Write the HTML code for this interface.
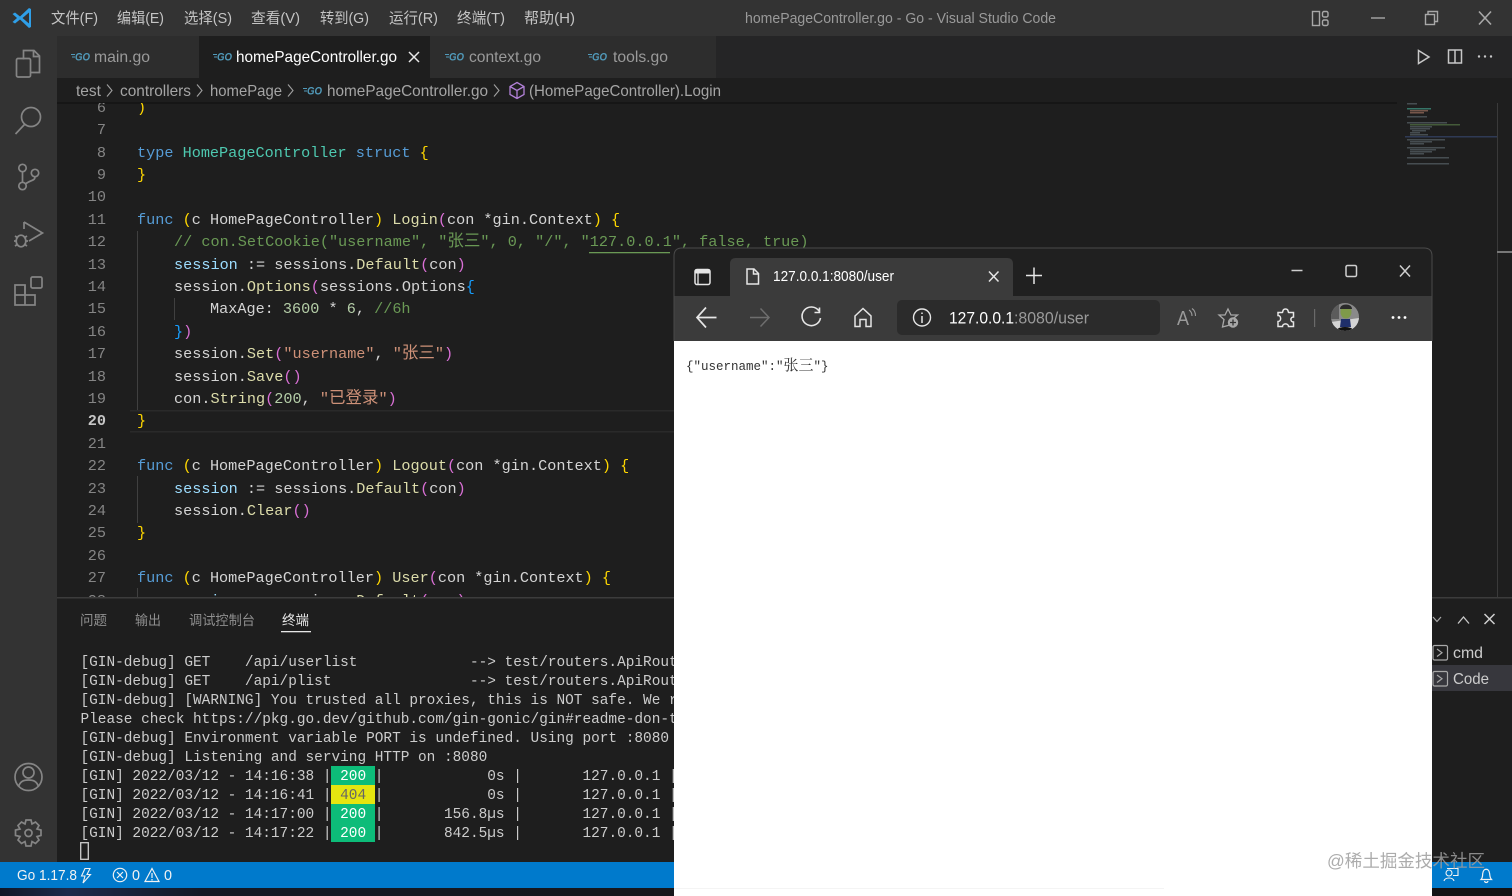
<!DOCTYPE html>
<html><head><meta charset="utf-8"><title>homePageController.go - Go - Visual Studio Code</title>
<style>
html,body{margin:0;padding:0;width:1512px;height:896px;overflow:hidden;background:#1e1e1e}
svg{display:block;position:absolute;left:0;top:0;filter:blur(.3px)}
text{white-space:pre}
.ui{font-family:"Liberation Sans","Noto Sans CJK SC",sans-serif}
.code{font-family:"Liberation Mono","Noto Sans CJK SC",monospace;font-size:15.2px;fill:#d4d4d4}
.term{font-family:"Liberation Mono","Noto Sans CJK SC",monospace;font-size:14.43px;fill:#cccccc}
.ln{font-family:"Liberation Mono",monospace;font-size:15.2px;fill:#858585;text-anchor:end}
.k{fill:#569cd6}.t{fill:#4ec9b0}.f{fill:#dcdcaa}.v{fill:#9cdcfe}.s{fill:#ce9178}.n{fill:#b5cea8}.c{fill:#6a9955}
.g{fill:#ffd700}.p{fill:#da70d6}.b{fill:#179fff}
.cj{font-size:16.5px}
.ic{fill:none;stroke:#858585;stroke-width:1.7}
.bi{fill:none;stroke:#e6e6e6;stroke-width:1.5}
.go{font-family:"Liberation Sans",sans-serif;font-size:11px;font-weight:bold;font-style:italic;fill:#519aba}
</style></head><body>
<svg width="1512" height="896" viewBox="0 0 1512 896" xmlns="http://www.w3.org/2000/svg">
<defs>
<clipPath id="ed"><rect x="57" y="103" width="1455" height="495"/></clipPath>
<clipPath id="av"><circle cx="1345" cy="317" r="14"/></clipPath>
<linearGradient id="strip" x1="0" x2="1" y1="0" y2="0"><stop offset="0" stop-color="#0f1626"/><stop offset=".1" stop-color="#1c2b4c"/><stop offset=".3" stop-color="#141825"/><stop offset="1" stop-color="#17171b"/></linearGradient>
</defs>

<rect width="1512" height="896" fill="#1e1e1e"/>
<!-- title bar -->
<rect width="1512" height="36" fill="#333333"/>
<path d="M29 8 L20 16.5 L15 12.5 L12.5 14 L17 18 L12.5 22 L15 23.5 L20 19.5 L29 28 L31 27 V9Z" fill="#2f9fe8"/>
<path d="M29 12.5 L22.5 18 L29 23.5Z" fill="#333"/>
<g class="ui" font-size="15" fill="#c4c4c4">
<text x="51" y="23" textLength="47" lengthAdjust="spacingAndGlyphs">文件(F)</text>
<text x="117" y="23" textLength="47" lengthAdjust="spacingAndGlyphs">编辑(E)</text>
<text x="184" y="23" textLength="48" lengthAdjust="spacingAndGlyphs">选择(S)</text>
<text x="251" y="23" textLength="49" lengthAdjust="spacingAndGlyphs">查看(V)</text>
<text x="320" y="23" textLength="49" lengthAdjust="spacingAndGlyphs">转到(G)</text>
<text x="389" y="23" textLength="49" lengthAdjust="spacingAndGlyphs">运行(R)</text>
<text x="457" y="23" textLength="48" lengthAdjust="spacingAndGlyphs">终端(T)</text>
<text x="524" y="23" textLength="51" lengthAdjust="spacingAndGlyphs">帮助(H)</text>
</g>
<text class="ui" x="745" y="23" font-size="15" fill="#9a9a9a" textLength="311" lengthAdjust="spacingAndGlyphs">homePageController.go - Go - Visual Studio Code</text>
<g fill="none" stroke="#a8a8a8" stroke-width="1.4">
<rect x="1312.5" y="11.5" width="7" height="14"/><rect x="1322.5" y="11.5" width="5.5" height="5.5" rx="1.5"/><rect x="1322.5" y="20" width="5.5" height="5.5" rx="1.5"/>
<path d="M1371 18H1385"/>
<rect x="1425.5" y="14.5" width="9" height="10"/><path d="M1428 14V11.5H1437.5V21.5H1435"/>
<path d="M1479 11.5L1491 24.5M1491 11.5L1479 24.5" stroke-width="1.6"/>
</g>

<!-- activity bar -->
<rect y="36" width="57" height="852" fill="#333333"/>
<g class="ic">
<path d="M23.5 59.5V50.5H34L39.5 56V72.5H30.5"/><path d="M33.5 50.5V56.5H39.5"/><rect x="16.5" y="58.5" width="14" height="18.5" rx="1.5"/>
<circle cx="31" cy="117" r="9.5"/><path d="M24.5 124.5L15.5 134"/>
<circle cx="22.5" cy="168" r="3.7"/><circle cx="22.5" cy="186" r="3.7"/><circle cx="35" cy="173" r="3.7"/><path d="M22.5 172V182M35 177C35 181 30 180 25.5 184"/>
<path d="M24 222L42.5 233L29 241"/><path d="M24 222V229"/><ellipse cx="21" cy="241" rx="4.8" ry="5.8"/><path d="M15 236L18 238M27 236L24 238M14 241H16M28 241H26M15 246L18 244M27 246L24 244"/>
<path d="M15 285H25V305H15ZM15 295H35V305H25"/><path d="M25 285V295"/><rect x="31" y="277" width="11" height="11" rx="1.5"/>
<circle cx="28.500" cy="777" r="13.500"/><circle cx="28.500" cy="772.500" r="5.500"/><path d="M18.500 787C20 781 24 780 28.500 780S37 781 38.500 787"/>
<circle cx="28.500" cy="833" r="3.500"/>
<path d="M26 820H31L32 824L35.500 822L39 825.500L37 829L41 830V835.500L37 836.500L39 840L35.500 843.500L32 841.500L31 846H26L25 841.500L21.500 843.500L18 840L20 836.500L15.500 835.500V830L20 829L18 825.500L21.500 822L25 824Z"/>
</g>

<!-- tab bar -->
<rect x="57" y="36" width="1455" height="42" fill="#252526"/>
<rect x="57" y="36" width="142" height="42" fill="#2d2d2d"/>
<rect x="430" y="36" width="286" height="42" fill="#2d2d2d"/>
<rect x="199" y="36" width="231" height="42" fill="#1e1e1e"/>
<!-- breadcrumb -->
<rect x="57" y="78" width="1455" height="25" fill="#1e1e1e"/>
<rect x="57" y="102" width="1340" height="2" fill="#161616"/>
<g class="go">
<text x="75" y="60.500" textLength="15" lengthAdjust="spacingAndGlyphs">GO</text><text x="217" y="60.500" textLength="15" lengthAdjust="spacingAndGlyphs">GO</text><text x="449" y="60.500" textLength="15" lengthAdjust="spacingAndGlyphs">GO</text><text x="592" y="60.500" textLength="15" lengthAdjust="spacingAndGlyphs">GO</text><text x="307" y="94.500" textLength="15" lengthAdjust="spacingAndGlyphs">GO</text>
</g>
<path d="M71 54.500H75M72 57H75M213 54.500H217M214 57H217M445 54.500H449M446 57H449M588 54.500H592M589 57H592M303 88.500H307M304 91H307" stroke="#519aba" stroke-width="1"/>
<g class="ui" font-size="16">
<text x="94" y="62" fill="#9a9a9a" textLength="56" lengthAdjust="spacingAndGlyphs">main.go</text>
<text x="236" y="62" fill="#ffffff" textLength="161" lengthAdjust="spacingAndGlyphs">homePageController.go</text>
<text x="469" y="62" fill="#9a9a9a" textLength="72" lengthAdjust="spacingAndGlyphs">context.go</text>
<text x="613" y="62" fill="#9a9a9a" textLength="55" lengthAdjust="spacingAndGlyphs">tools.go</text>
</g>
<path d="M409 52L419 62M419 52L409 62" stroke="#e8e8e8" stroke-width="1.5"/>
<path d="M1418.500 50.500L1429 57L1418.500 63.500Z" fill="none" stroke="#c8c8c8" stroke-width="1.5"/>
<path d="M1448.500 50H1461.500V63H1448.500ZM1455 50V63" fill="none" stroke="#c8c8c8" stroke-width="1.500"/>
<g fill="#c8c8c8"><circle cx="1479" cy="56.500" r="1.200"/><circle cx="1485" cy="56.500" r="1.200"/><circle cx="1491" cy="56.500" r="1.200"/></g>

<g class="ui" font-size="16" fill="#a5a5a5">
<text x="76" y="96" textLength="25" lengthAdjust="spacingAndGlyphs">test</text>
<text x="120" y="96" textLength="71" lengthAdjust="spacingAndGlyphs">controllers</text>
<text x="210" y="96" textLength="72" lengthAdjust="spacingAndGlyphs">homePage</text>
<text x="327" y="96" textLength="161" lengthAdjust="spacingAndGlyphs">homePageController.go</text>
<text x="529" y="96" textLength="192" lengthAdjust="spacingAndGlyphs">(HomePageController).Login</text>
</g>
<path d="M107 84.500L112 90.500L107 96.500M197 84.500L202 90.500L197 96.500M288 84.500L293 90.500L288 96.500M494 84.500L499 90.500L494 96.500" fill="none" stroke="#a0a0a0" stroke-width="1.100"/>
<path d="M517 82.500L524 86.500V94.500L517 98.500L510 94.500V86.500ZM510 86.500L517 90.500L524 86.500M517 90.500V98.500" fill="none" stroke="#b180d7" stroke-width="1.300"/>

<!-- editor -->
<g clip-path="url(#ed)">
<rect x="130" y="410" width="1267" height="1.500" fill="#2a2a2a"/><rect x="130" y="431" width="1267" height="1.500" fill="#2a2a2a"/>
<path d="M137.500 231V410M174.500 298V320M137.500 476V523M137.500 588V598" stroke="#404040" stroke-width="1"/>
<g class="ln">
<text x="106" y="112">6</text><text x="106" y="134">7</text><text x="106" y="157">8</text><text x="106" y="179">9</text><text x="106" y="201">10</text><text x="106" y="224">11</text><text x="106" y="246">12</text><text x="106" y="269">13</text><text x="106" y="291">14</text><text x="106" y="313">15</text><text x="106" y="336">16</text><text x="106" y="358">17</text><text x="106" y="381">18</text><text x="106" y="403">19</text><text x="106" y="425" style="fill:#c6c6c6;font-weight:bold">20</text><text x="106" y="448">21</text><text x="106" y="470">22</text><text x="106" y="493">23</text><text x="106" y="515">24</text><text x="106" y="537">25</text><text x="106" y="560">26</text><text x="106" y="582">27</text><text x="106" y="605">28</text>
</g>
<g class="code">
<text x="137" y="112"><tspan class="g">)</tspan></text>
<text x="137" y="157"><tspan class="k">type</tspan> <tspan class="t">HomePageController</tspan> <tspan class="k">struct</tspan> <tspan class="g">{</tspan></text>
<text x="137" y="179"><tspan class="g">}</tspan></text>
<text x="137" y="224"><tspan class="k">func</tspan> <tspan class="g">(</tspan>c <tspan class="t" style="fill:#d4d4d4">HomePageController</tspan><tspan class="g">)</tspan> <tspan class="f">Login</tspan><tspan class="p">(</tspan>con *gin.Context<tspan class="p" style="fill:#ffd700">)</tspan> <tspan class="g">{</tspan></text>
<text x="174" y="246" class="c" style="fill:#6a9955">// con.SetCookie("username", "<tspan class="cj">张三</tspan>", 0, "/", "127.0.0.1", false, true)</text>
<text x="174" y="269"><tspan class="v">session</tspan> := sessions.<tspan class="f">Default</tspan><tspan class="p">(</tspan>con<tspan class="p">)</tspan></text>
<text x="174" y="291">session.<tspan class="f">Options</tspan><tspan class="p">(</tspan>sessions.Options<tspan class="b">{</tspan></text>
<text x="210" y="313">MaxAge: <tspan class="n">3600</tspan> * <tspan class="n">6</tspan>, <tspan class="c">//6h</tspan></text>
<text x="174" y="336"><tspan class="b">}</tspan><tspan class="p">)</tspan></text>
<text x="174" y="358">session.<tspan class="f">Set</tspan><tspan class="p">(</tspan><tspan class="s">"username"</tspan>, <tspan class="s">"<tspan class="cj">张三</tspan>"</tspan><tspan class="p">)</tspan></text>
<text x="174" y="381">session.<tspan class="f">Save</tspan><tspan class="p">()</tspan></text>
<text x="174" y="403">con.<tspan class="f">String</tspan><tspan class="p">(</tspan><tspan class="n">200</tspan>, <tspan class="s">"<tspan class="cj">已登录</tspan>"</tspan><tspan class="p">)</tspan></text>
<text x="137" y="425"><tspan class="g">}</tspan></text>
<text x="137" y="470"><tspan class="k">func</tspan> <tspan class="g">(</tspan>c HomePageController<tspan class="g">)</tspan> <tspan class="f">Logout</tspan><tspan class="p">(</tspan>con *gin.Context<tspan class="g">)</tspan> <tspan class="g">{</tspan></text>
<text x="174" y="493"><tspan class="v">session</tspan> := sessions.<tspan class="f">Default</tspan><tspan class="p">(</tspan>con<tspan class="p">)</tspan></text>
<text x="174" y="515">session.<tspan class="f">Clear</tspan><tspan class="p">()</tspan></text>
<text x="137" y="537"><tspan class="g">}</tspan></text>
<text x="137" y="582"><tspan class="k">func</tspan> <tspan class="g">(</tspan>c HomePageController<tspan class="g">)</tspan> <tspan class="f">User</tspan><tspan class="p">(</tspan>con *gin.Context<tspan class="g">)</tspan> <tspan class="g">{</tspan></text>
<text x="174" y="605"><tspan class="v">session</tspan> := sessions.<tspan class="f">Default</tspan><tspan class="p">(</tspan>con<tspan class="p">)</tspan></text>
</g>
<rect x="589" y="252" width="81" height="1.300" fill="#6a9955"/>
</g>
<!-- minimap -->
<g fill="#6f7d85" opacity=".5">
<rect x="1407" y="103" width="10" height="1.500"/><rect x="1407" y="108" width="24" height="1.500" fill="#4ec9b0"/><rect x="1410" y="110" width="18" height="1.500" fill="#ce9178"/><rect x="1410" y="112" width="14" height="1.500" fill="#ce9178"/>
<rect x="1407" y="116" width="20" height="1.500"/><rect x="1407" y="122" width="40" height="1.500"/><rect x="1410" y="124" width="50" height="1.500" fill="#6a9955"/><rect x="1410" y="126" width="22" height="1.500"/><rect x="1410" y="128" width="20" height="1.500"/><rect x="1412" y="130" width="14" height="1.500"/><rect x="1410" y="132" width="10" height="1.500"/><rect x="1410" y="134" width="18" height="1.500"/>
<rect x="1407" y="139" width="38" height="1.500"/><rect x="1410" y="141" width="22" height="1.500"/><rect x="1410" y="143" width="14" height="1.500"/>
<rect x="1407" y="147" width="38" height="1.500"/><rect x="1410" y="149" width="26" height="1.500"/><rect x="1410" y="151" width="22" height="1.500"/><rect x="1410" y="153" width="14" height="1.500"/>
<rect x="1407" y="157" width="42" height="1.500"/><rect x="1407" y="163" width="42" height="1.500"/>
</g>
<rect x="1405" y="136" width="92" height="1.500" fill="#2f3a55"/>
<!-- scrollbar -->
<rect x="1497" y="103" width="1" height="495" fill="#3a3a3a"/>
<rect x="1497" y="251" width="15" height="2" fill="#777"/>

<!-- panel -->
<rect x="57" y="598" width="1455" height="264" fill="#1e1e1e"/>
<rect x="57" y="597" width="1455" height="1.500" fill="#3c3c3c"/>
<g class="ui" font-size="13.500" fill="#8f8f8f">
<text x="80" y="625" textLength="27" lengthAdjust="spacingAndGlyphs">问题</text>
<text x="135" y="625" textLength="26" lengthAdjust="spacingAndGlyphs">输出</text>
<text x="189" y="625" textLength="66" lengthAdjust="spacingAndGlyphs">调试控制台</text>
<text x="282" y="625" textLength="27" lengthAdjust="spacingAndGlyphs" fill="#e7e7e7">终端</text>
</g>
<rect x="281" y="631" width="30" height="1.300" fill="#e7e7e7"/>
<g class="term">
<text x="80.500" y="666">[GIN-debug] GET    /api/userlist             --&gt; test/routers.ApiRout</text>
<text x="80.500" y="685">[GIN-debug] GET    /api/plist                --&gt; test/routers.ApiRout</text>
<text x="80.500" y="704">[GIN-debug] [WARNING] You trusted all proxies, this is NOT safe. We r</text>
<text x="80.500" y="723">Please check https://pkg.go.dev/github.com/gin-gonic/gin#readme-don-t</text>
<text x="80.500" y="742">[GIN-debug] Environment variable PORT is undefined. Using port :8080 </text>
<text x="80.500" y="761">[GIN-debug] Listening and serving HTTP on :8080</text>
</g>
<rect x="331" y="766" width="44" height="19" fill="#0dbc79"/>
<rect x="331" y="785" width="44" height="19" fill="#e5e510"/>
<rect x="331" y="804" width="44" height="38" fill="#0dbc79"/>
<g class="term">
<text x="80.500" y="780">[GIN] 2022/03/12 - 14:16:38 |<tspan style="fill:#fff"> 200 </tspan>|            0s |       127.0.0.1 |</text>
<text x="80.500" y="799">[GIN] 2022/03/12 - 14:16:41 |<tspan style="fill:#666"> 404 </tspan>|            0s |       127.0.0.1 |</text>
<text x="80.500" y="818">[GIN] 2022/03/12 - 14:17:00 |<tspan style="fill:#fff"> 200 </tspan>|       156.8µs |       127.0.0.1 |</text>
<text x="80.500" y="837">[GIN] 2022/03/12 - 14:17:22 |<tspan style="fill:#fff"> 200 </tspan>|       842.5µs |       127.0.0.1 |</text>
</g>
<rect x="80.700" y="842.700" width="7.600" height="16.600" fill="none" stroke="#cccccc" stroke-width="1.300"/>
<!-- right panel -->
<rect x="1432" y="665" width="80" height="26" fill="#37373d"/>
<g fill="none" stroke="#a8a8a8" stroke-width="1.200">
<rect x="1433" y="645.500" width="14.500" height="14.500" rx="1.500"/><path d="M1437 649L1442 652.700L1437 656.500"/>
<rect x="1433" y="671.500" width="14.500" height="14.500" rx="1.500"/><path d="M1437 675L1442 678.700L1437 682.500"/>
<path d="M1433 617L1437 621.500L1441 617" />
</g>
<path d="M1458 623.500L1463.500 617L1469 623.500" fill="none" stroke="#c8c8c8" stroke-width="1.300"/>
<path d="M1484.500 614L1494.500 624M1494.500 614L1484.500 624" stroke="#d0d0d0" stroke-width="1.500"/>
<g class="ui" font-size="16" fill="#cccccc">
<text x="1453" y="658" textLength="30" lengthAdjust="spacingAndGlyphs">cmd</text>
<text x="1453" y="684" textLength="36" lengthAdjust="spacingAndGlyphs">Code</text>
</g>

<!-- status bar -->
<rect y="862" width="1512" height="26" fill="#007acc"/>
<text class="ui" x="17" y="880" font-size="15" fill="#f2f2f2" textLength="60" lengthAdjust="spacingAndGlyphs">Go 1.17.8</text>
<path d="M85 868.500H90L87 874.500H90.500L83 883L85 876H81.500Z" fill="none" stroke="#f2f2f2" stroke-width="1.100"/>
<circle cx="120" cy="875" r="6.700" fill="none" stroke="#f2f2f2" stroke-width="1.200"/><path d="M117 872L123 878M123 872L117 878" stroke="#f2f2f2" stroke-width="1.200"/>
<path d="M152 868.500L159 881.500H145Z" fill="none" stroke="#f2f2f2" stroke-width="1.200"/><path d="M152 873V878M152 879V880.500" stroke="#f2f2f2" stroke-width="1.200"/>
<g class="ui" font-size="15" fill="#f2f2f2"><text x="132" y="880" textLength="8" lengthAdjust="spacingAndGlyphs">0</text><text x="164" y="880" textLength="8" lengthAdjust="spacingAndGlyphs">0</text></g>
<path d="M1447 868.500H1458V875.500H1453" fill="none" stroke="#f2f2f2" stroke-width="1.100"/>
<circle cx="1449" cy="873" r="3" fill="#007acc" stroke="#f2f2f2" stroke-width="1.100"/><path d="M1444 881C1445 877 1453 877 1454 881" fill="none" stroke="#f2f2f2" stroke-width="1.100"/>
<path d="M1481 879.500H1491.500C1489.500 877.500 1490 875 1489.500 873C1488.800 868 1483.500 868 1482.800 873C1482.400 875 1483 877.500 1481 879.500ZM1484.500 881C1485 883 1487.500 883 1488 881" fill="none" stroke="#f2f2f2" stroke-width="1.200"/>

<!-- desktop strip -->
<rect y="888" width="674" height="8" fill="url(#strip)"/>
<rect x="1432" y="888" width="80" height="8" fill="#121214"/>

<!-- browser window -->
<path d="M674 896V256Q674 248 682 248H1424Q1432 248 1432 256V896Z" fill="#202020"/>
<path d="M674 341V256Q674 248 682 248H1424Q1432 248 1432 256V341" fill="none" stroke="#4a4a4a" stroke-width="1"/>
<path d="M730 296V264Q730 258 736 258H1007Q1013 258 1013 264V296Z" fill="#3b3b3b"/>
<rect x="674.500" y="296" width="757" height="45" fill="#3b3b3b"/>
<rect x="897" y="300" width="263" height="35" rx="5" fill="#2b2b2b"/>
<rect x="674" y="341" width="758" height="555" fill="#ffffff"/>
<rect x="674" y="888" width="490" height="1" fill="#f4f4f4"/>
<!-- browser tab strip icons -->
<rect x="695" y="269" width="15" height="4.500" rx="1.500" fill="#e6e6e6"/>
<g class="bi">
<rect x="695" y="269.500" width="15" height="15" rx="2"/><path d="M698 273.500V284" stroke-width="1.300"/>
<path d="M747 269H754L758.500 273.500V284H747ZM753.500 269V274H758.500"/>
<path d="M989 271.500L998.500 281.500M998.500 271.500L989 281.500"/>
<path d="M1034 267.500V284M1026 275.500H1042"/>
<path d="M1291.500 270.500H1302.500" stroke="#cfcfcf"/>
<rect x="1346" y="265.500" width="10.500" height="11" rx="1.500" stroke="#cfcfcf"/>
<path d="M1400 265.500L1410 276.500M1410 265.500L1400 276.500" stroke="#cfcfcf"/>
<path d="M697 317.500H716.500M706 307.500L697 317.500L706 327.500" stroke-width="1.700"/>
<path d="M750 317.500H769M760.500 308.500L769 317.500L760.500 326.500" stroke="#6e6e6e" stroke-width="1.500"/>
<path d="M819 311A9.300 9.300 0 1 0 820.500 318M819.500 307.500V312.500H814.500" stroke-width="1.600"/>
<path d="M855 316L863 308.500L871 316V326.500H866V319.500H860V326.500H855Z" stroke-width="1.500"/>
<circle cx="922" cy="317.500" r="8.500" stroke-width="1.400"/><path d="M922 316V323M922 312.500V314"/>
<path d="M1285.500 309C1289 309 1288 312.500 1288.500 312.500H1293.500V317C1290 317 1290 322 1293.500 322V326.500H1288.500C1288.500 323 1282.500 323 1282.500 326.500H1278V321.500C1281.500 321.500 1281.500 315.500 1278 315.500V312.500H1282.500C1283 312.500 1282 309 1285.500 309Z" stroke-width="1.500"/>
</g>
<text class="ui" x="773" y="281" font-size="15" fill="#ffffff" textLength="121" lengthAdjust="spacingAndGlyphs">127.0.0.1:8080/user</text>
<text class="ui" x="949" y="323.500" font-size="17" fill="#ffffff" textLength="65" lengthAdjust="spacingAndGlyphs">127.0.0.1</text>
<text class="ui" x="1014" y="323.500" font-size="17" fill="#9a9a9a" textLength="75" lengthAdjust="spacingAndGlyphs">:8080/user</text>
<text class="ui" x="1177" y="325" font-size="20" fill="#9a9a9a" textLength="12" lengthAdjust="spacingAndGlyphs">A</text>
<path d="M1189 310C1191.500 311.500 1192 313.500 1192 316M1192 308.500C1195 310.500 1195.500 313.500 1195.500 316" fill="none" stroke="#9a9a9a" stroke-width="1.100"/>
<path d="M1228 309L1231 315H1237.500L1232 319.500L1233 323.500L1228 325.500L1222.500 327L1224 319.500L1219 315H1225Z" fill="none" stroke="#a8a8a8" stroke-width="1.300"/>
<circle cx="1233" cy="322.500" r="5.200" fill="#a8a8a8"/><path d="M1233 319.500V325.500M1230 322.500H1236" stroke="#333" stroke-width="1.300"/>
<rect x="1314" y="309" width="1.200" height="18" fill="#6a6a6a"/>
<g clip-path="url(#av)">
<rect x="1331" y="303" width="28" height="28" fill="#8a8a8a"/>
<rect x="1331" y="303" width="8" height="16" fill="#5c5c5c"/>
<path d="M1331 322L1359 318V331H1331Z" fill="#d4d4d4"/>
<path d="M1341 319H1350L1351 327H1340Z" fill="#1f2f6a"/>
<ellipse cx="1346" cy="312" rx="5.500" ry="6.500" fill="#7f9a4a"/>
<path d="M1340 309C1340 303 1352 303 1352 309Z" fill="#2a2a2a"/>
<ellipse cx="1345" cy="329" rx="7" ry="2" fill="#111"/>
</g>
<g fill="#ffffff"><circle cx="1393" cy="317.500" r="1.400"/><circle cx="1399" cy="317.500" r="1.400"/><circle cx="1405" cy="317.500" r="1.400"/></g>
<text x="686" y="370" font-family="'Liberation Mono','Noto Serif CJK SC',serif" font-size="12.500" fill="#333333">{"username":"<tspan font-size="15" font-family="'Noto Serif CJK SC',serif">张三</tspan>"}</text>

<!-- watermark -->
<text x="1327" y="867" class="ui" font-size="17.500" fill="#9e9e9e" fill-opacity=".85" textLength="158" lengthAdjust="spacingAndGlyphs">@稀土掘金技术社区</text>
</svg>
</body></html>
